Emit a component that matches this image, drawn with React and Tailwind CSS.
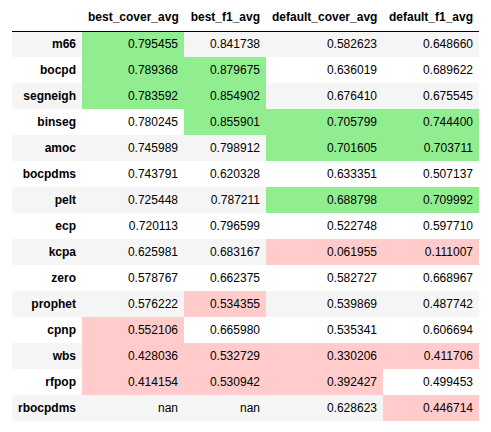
import React from 'react';

const cols = ['best_cover_avg', 'best_f1_avg', 'default_cover_avg', 'default_f1_avg'];

// g = lightgreen highlight, r = pink highlight, '' = none
const rows = [
  ['m66', ['0.795455', 'g'], ['0.841738', ''], ['0.582623', ''], ['0.648660', '']],
  ['bocpd', ['0.789368', 'g'], ['0.879675', 'g'], ['0.636019', ''], ['0.689622', '']],
  ['segneigh', ['0.783592', 'g'], ['0.854902', 'g'], ['0.676410', ''], ['0.675545', '']],
  ['binseg', ['0.780245', ''], ['0.855901', 'g'], ['0.705799', 'g'], ['0.744400', 'g']],
  ['amoc', ['0.745989', ''], ['0.798912', ''], ['0.701605', 'g'], ['0.703711', 'g']],
  ['bocpdms', ['0.743791', ''], ['0.620328', ''], ['0.633351', ''], ['0.507137', '']],
  ['pelt', ['0.725448', ''], ['0.787211', ''], ['0.688798', 'g'], ['0.709992', 'g']],
  ['ecp', ['0.720113', ''], ['0.796599', ''], ['0.522748', ''], ['0.597710', '']],
  ['kcpa', ['0.625981', ''], ['0.683167', ''], ['0.061955', 'r'], ['0.111007', 'r']],
  ['zero', ['0.578767', ''], ['0.662375', ''], ['0.582727', ''], ['0.668967', '']],
  ['prophet', ['0.576222', ''], ['0.534355', 'r'], ['0.539869', ''], ['0.487742', '']],
  ['cpnp', ['0.552106', 'r'], ['0.665980', ''], ['0.535341', ''], ['0.606694', '']],
  ['wbs', ['0.428036', 'r'], ['0.532729', 'r'], ['0.330206', 'r'], ['0.411706', 'r']],
  ['rfpop', ['0.414154', 'r'], ['0.530942', 'r'], ['0.392427', 'r'], ['0.499453', '']],
  ['rbocpdms', ['nan', ''], ['nan', ''], ['0.628623', ''], ['0.446714', 'r']],
];

const widths = ['w-[102px]', 'w-[82px]', 'w-[117px]', 'w-[96px]'];

function App() {
  return (
    <div className="w-[491px] h-[432px] bg-white pt-1 pl-3 font-['Liberation_Sans',Arial,sans-serif] text-[12px] text-black">
      <table className="border-collapse table-fixed w-[467px]">
        <thead>
          <tr className="h-[27px] border-b border-black">
            <th className="w-[70px]"></th>
            {cols.map((c, i) => (
              <th key={c} className={`${widths[i]} px-[6px] text-right font-bold leading-[14px]`}>{c}</th>
            ))}
          </tr>
        </thead>
        <tbody>
          {rows.map(([name, ...cells], ri) => (
            <tr key={name} className={`h-[26px] ${ri % 2 === 0 ? 'bg-[#f5f5f5]' : 'bg-white'}`}>
              <th className="px-[6px] text-right font-bold leading-[14px]">{name}</th>
              {cells.map(([v, h], ci) => (
                <td
                  key={ci}
                  className={`px-[6px] text-right leading-[14px] ${h === 'g' ? 'bg-[#90ee90]' : h === 'r' ? 'bg-[#ffcccb]' : ''}`}
                >
                  {v}
                </td>
              ))}
            </tr>
          ))}
        </tbody>
      </table>
    </div>
  );
}

export default App;
